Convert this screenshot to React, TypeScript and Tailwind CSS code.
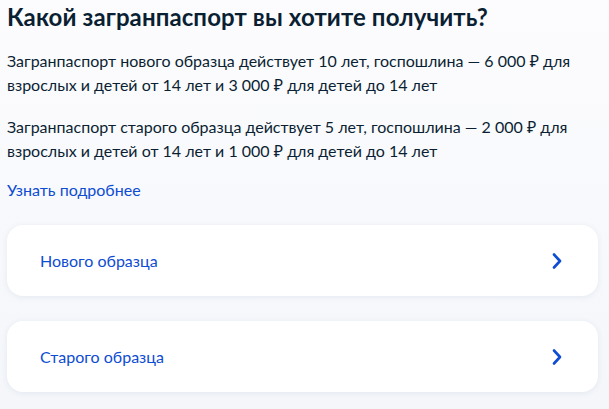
const options = ["Нового образца", "Старого образца"];

function Chevron() {
  return (
    <svg width="12" height="18" viewBox="0 0 12 18" fill="none" aria-hidden>
      <path
        d="M3 2.5L9 9L3 15.5"
        stroke="#0d4cd3"
        strokeWidth="2.6"
        strokeLinecap="round"
        strokeLinejoin="round"
      />
    </svg>
  );
}

export default function App() {
  return (
    <div
      className="min-h-[409px] w-[609px] bg-gradient-to-b from-[#fcfcfe] to-[#f4f6fa] px-[7px] text-[#0b1f33]"
      style={{ fontFamily: "Lato, 'Noto Sans', sans-serif" }}
    >
      <h1 className="pt-[1px] text-[24px] font-bold leading-[32px] tracking-[0.1px]">
        Какой загранпаспорт вы хотите получить?
      </h1>
      <p className="mt-[16px] text-[16px] leading-[24px]">
        Загранпаспорт нового образца действует 10 лет, госпошлина — 6 000 ₽ для
        взрослых и детей от 14 лет и 3 000 ₽ для детей до 14 лет
      </p>
      <p className="mt-[18px] text-[16px] leading-[24px]">
        Загранпаспорт старого образца действует 5 лет, госпошлина — 2 000 ₽ для
        взрослых и детей от 14 лет и 1 000 ₽ для детей до 14 лет
      </p>
      <a className="mt-[15px] block text-[16px] leading-[24px] text-[#0d4cd3]">
        Узнать подробнее
      </a>
      <div className="mt-[23px] flex w-[591px] flex-col gap-[25px]">
        {options.map((o) => (
          <div
            key={o}
            className="flex h-[71px] items-center justify-between rounded-[16px] bg-white pl-[33px] pr-[35px] shadow-[0_1px_6px_rgba(30,60,120,0.08)]"
          >
            <span className="text-[16px] leading-[24px] text-[#0d4cd3]">{o}</span>
            <Chevron />
          </div>
        ))}
      </div>
    </div>
  );
}
